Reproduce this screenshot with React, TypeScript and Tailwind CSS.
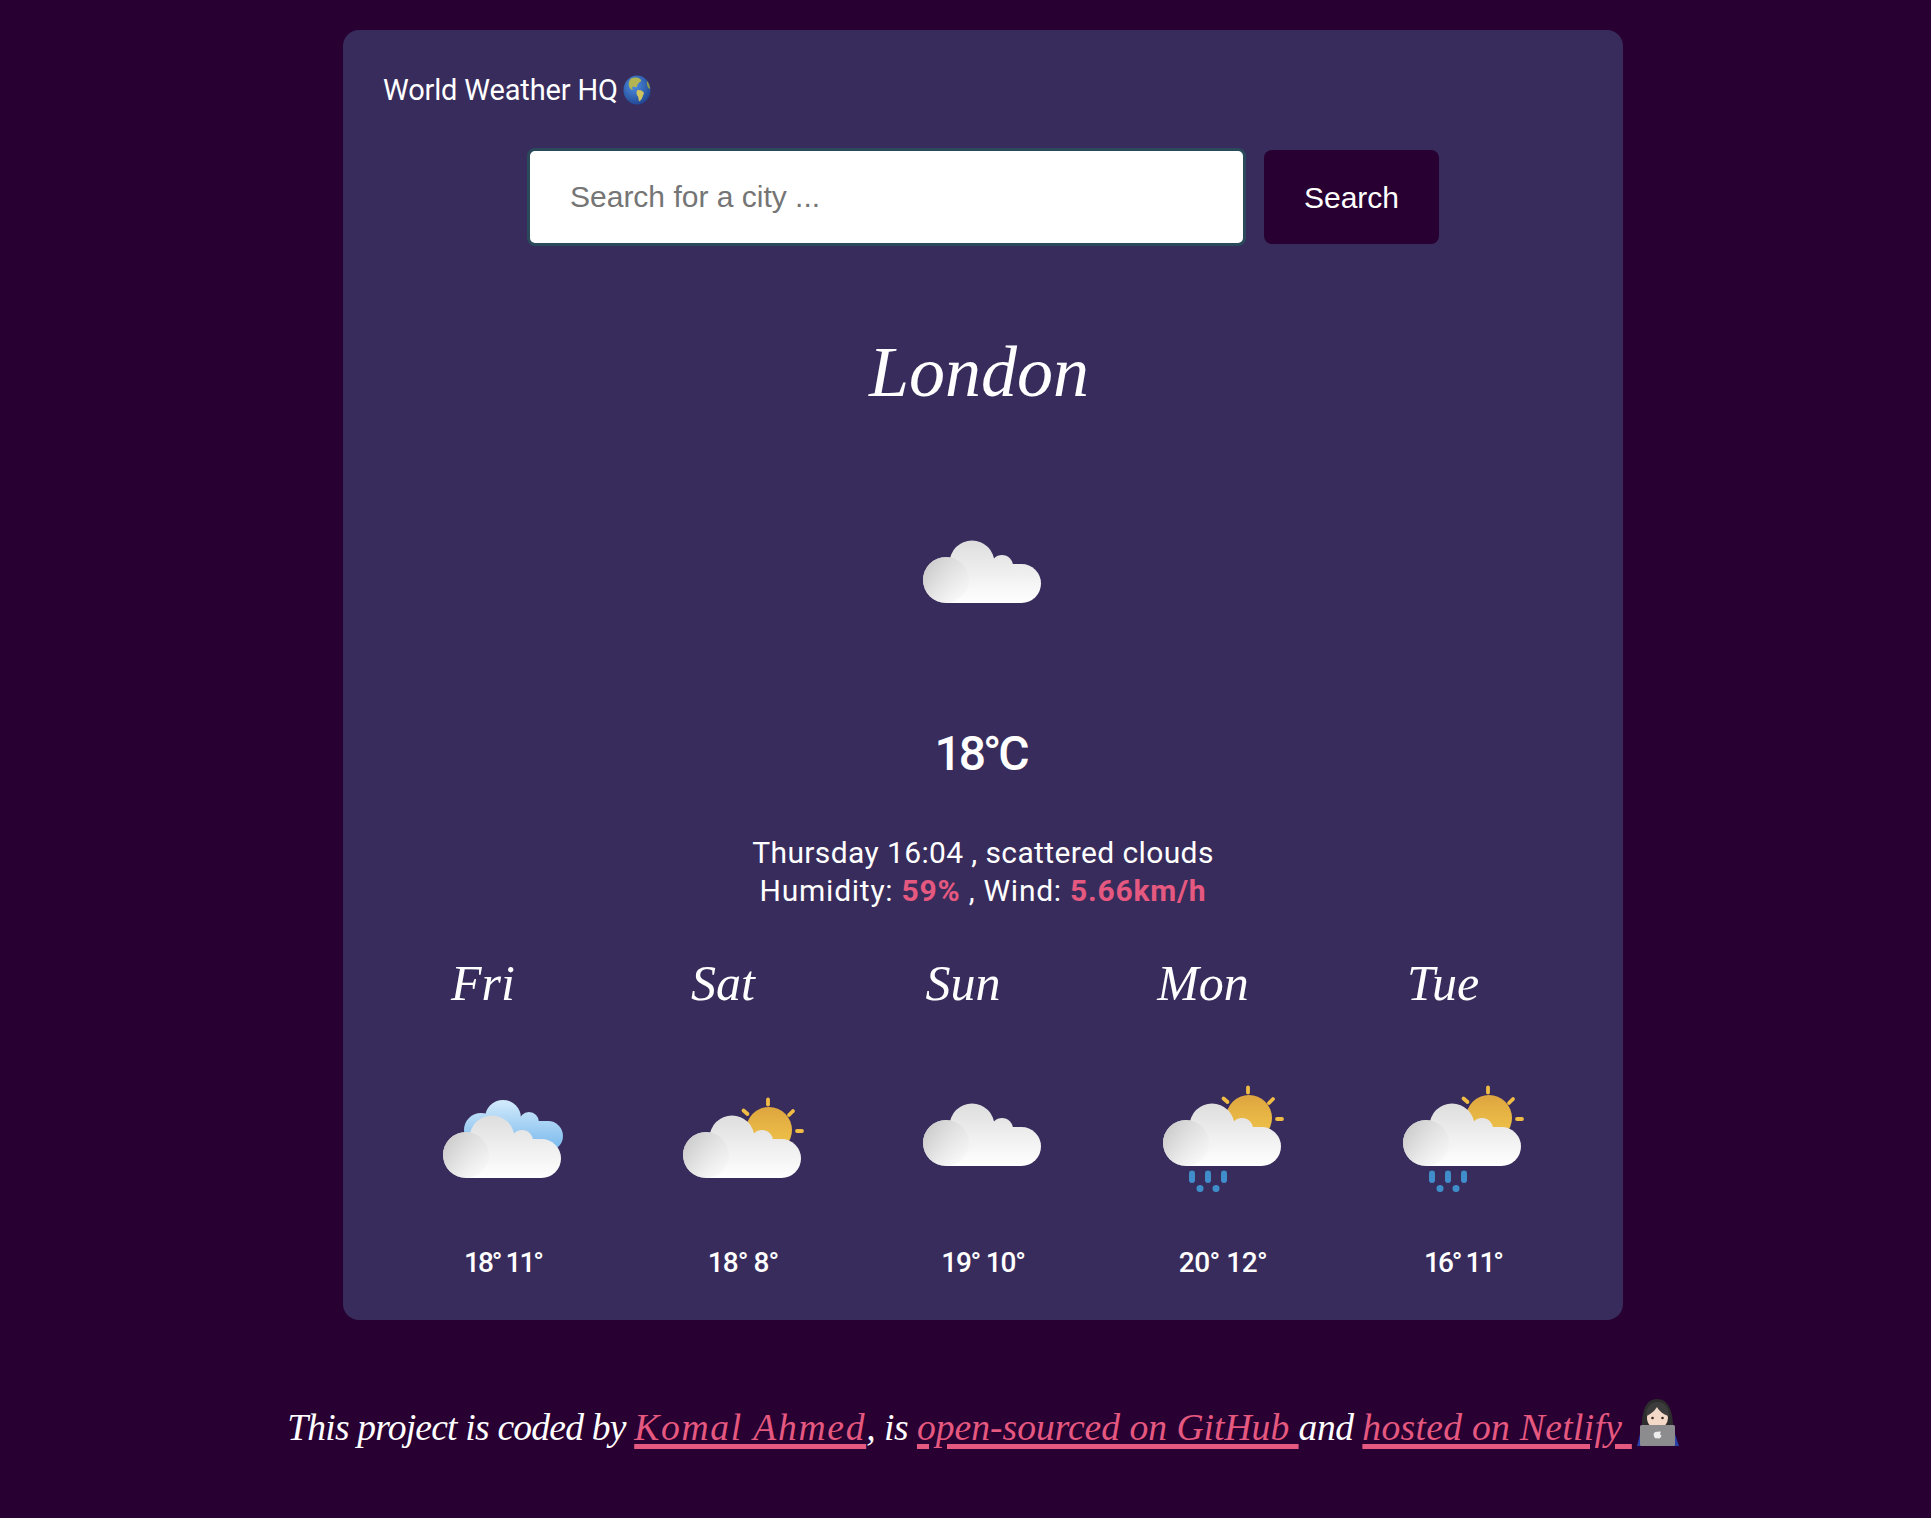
import React from "react";

const barlow = "font-['Roboto',sans-serif]";
const script = "font-['Liberation_Serif',serif] italic";

type Kind = "cloud" | "blue" | "sun" | "rain";

function WeatherIcon({ kind, id }: { kind: Kind; id: string }) {
  const up = kind === "cloud" || kind === "rain" ? -13 : -1;
  const sun = kind === "sun" || kind === "rain";
  return (
    <svg width="160" height="160" viewBox="-20 -50 160 160" className="block">
      <defs>
        <linearGradient id={`c${id}`} x1="0" y1="0" x2="0" y2="62" gradientUnits="userSpaceOnUse">
          <stop offset="0" stopColor="#dedede" />
          <stop offset="1" stopColor="#ffffff" />
        </linearGradient>
        <linearGradient id={`l${id}`} x1="0" y1="24" x2="46" y2="52" gradientUnits="userSpaceOnUse">
          <stop offset="0" stopColor="#c8c8c8" />
          <stop offset="1" stopColor="#e9e9e9" stopOpacity="0.12" />
        </linearGradient>
        <linearGradient id={`s${id}`} x1="0" y1="-9" x2="0" y2="37" gradientUnits="userSpaceOnUse">
          <stop offset="0" stopColor="#dea53f" />
          <stop offset="1" stopColor="#f2c94c" />
        </linearGradient>
        <linearGradient id={`b${id}`} x1="0" y1="-16" x2="0" y2="34" gradientUnits="userSpaceOnUse">
          <stop offset="0" stopColor="#d3ebfc" />
          <stop offset="1" stopColor="#78b8ec" />
        </linearGradient>
      </defs>
      <g transform={`translate(0 ${up})`}>
        {kind === "blue" && (
          <g fill={`url(#b${id})`}>
            <circle cx="38" cy="14" r="17" />
            <circle cx="60" cy="2" r="18" />
            <circle cx="86" cy="6" r="10" />
            <circle cx="105" cy="20" r="15" />
            <rect x="36" y="5" width="70" height="30" />
          </g>
        )}
        {sun && (
          <g>
            <circle cx="86" cy="14" r="23" fill={`url(#s${id})`} />
            <g stroke="#f0bc45" strokeWidth="3.8" strokeLinecap="round">
              <line x1="85" y1="-16.500" x2="85" y2="-11.500" />
              <line x1="110" y1="-5" x2="106" y2="-1" />
              <line x1="60.500" y1="-5.500" x2="64.500" y2="-2" />
              <line x1="114" y1="15" x2="119" y2="15" />
            </g>
          </g>
        )}
        <g fill={`url(#c${id})`}>
          <circle cx="23" cy="39" r="23" />
          <circle cx="49" cy="22" r="22.500" />
          <circle cx="79" cy="25" r="11" />
          <circle cx="98.500" cy="42.500" r="19.500" />
          <rect x="23" y="23" width="75" height="39" />
        </g>
        <circle cx="23" cy="39" r="23" fill={`url(#l${id})`} />
        {kind === "rain" && (
          <g fill="#3f8ecb">
            <rect x="26" y="66.500" width="6" height="12.500" rx="3" />
            <rect x="42" y="66.500" width="6" height="12.500" rx="3" />
            <rect x="58" y="66.500" width="6" height="12.500" rx="3" />
            <circle cx="37" cy="84.500" r="3.500" />
            <circle cx="53" cy="84.500" r="3.500" />
          </g>
        )}
      </g>
    </svg>
  );
}

function Globe() {
  return (
    <svg width="28" height="30" viewBox="0 0 28 30" className="ml-[5px] inline-block align-[-5px]">
      <defs>
        <radialGradient id="gl" cx="0.4" cy="0.35" r="0.75">
          <stop offset="0" stopColor="#4f8fe0" />
          <stop offset="1" stopColor="#1c3f8c" />
        </radialGradient>
      </defs>
      <ellipse cx="14" cy="15" rx="13.500" ry="14.500" fill="url(#gl)" />
      <path d="M8 3.500c3-1.500 7-1.500 9 .5 2 1 1 3-1 3.500-1 1.500-2.500 3-2 4.500-1.500.5-3-.5-4-.5-1.500 1-1 3 .5 3.500-2 .5-4-2-4.500-4-.5-2.500-.5-5 2-7.500z" fill="#b3b552" />
      <path d="M14 15.500c2-1 5 0 6.500 1.500 1 1.500-.5 3-1 5-.7 2-2 4-3.500 4.500-.5-2-.5-3.500-1-5-1.500-1.500-2-3.500-1-6z" fill="#d0c25e" />
      <path d="M24 6c2 2 3 5 3 8-1 0-2-1-2.500-2.500-.5-2-1-3.500-.5-5.500z" fill="#8f9a4a" />
    </svg>
  );
}

function Woman() {
  return (
    <svg width="43" height="49" viewBox="0 0 43 49" className="ml-[4px] inline-block align-[-7px]">
      <path d="M1 48l3-12h35l4 12z" fill="#2a3fa8" />
      <path d="M6 40C5 22 6 1 21 1s17 21 16 39z" fill="#2d2d2d" />
      <ellipse cx="21.500" cy="20" rx="10.500" ry="11" fill="#f4d9c8" />
      <path d="M10 18c3-1 8-4 11-9 2 4 7 8 12 9 0-8-4-14-11.500-14S10 10 10 18z" fill="#3c3c3c" />
      <circle cx="16.500" cy="20" r="1.300" fill="#3a2a22" />
      <circle cx="26.500" cy="20" r="1.300" fill="#3a2a22" />
      <rect x="4" y="27" width="35" height="21" rx="1.500" fill="#8c8c8f" />
      <path d="M21.500 34c2-1 3.500 0 3.500 0-1.500 1-1 3 .5 3.500-.5 2-2 3.500-3 3-1-.5-1.500-.5-2.500 0-1.500 0-3.500-4.500-1.500-6 1-.8 2-.8 3-.5z" fill="#ececec" />
    </svg>
  );
}

const days: { d: string; i: Kind; t: string; c: string }[] = [
  { d: "Fri", i: "blue", t: "18° 11°", c: "tracking-[-2px]" },
  { d: "Sat", i: "sun", t: "18° 8°", c: "tracking-[-0.9px]" },
  { d: "Sun", i: "cloud", t: "19° 10°", c: "tracking-[-1.2px]" },
  { d: "Mon", i: "rain", t: "20° 12°", c: "tracking-[-0.5px]" },
  { d: "Tue", i: "rain", t: "16° 11°", c: "tracking-[-2px]" },
];

const link = "text-[#e5587f] underline decoration-[5px] underline-offset-[4px]";

export default function App() {
  return (
    <div className="min-h-[1518px] bg-[#280032] pt-[30px] pl-[35px] text-white">
      <div className="mx-auto flex h-[1290px] w-[1280px] flex-col rounded-[16px] bg-[#382c5c] px-10 pt-10">
        <h1 className={`${barlow} h-10 text-[29px] leading-10 font-normal tracking-[-0.15px]`}>
          World Weather HQ
          <Globe />
        </h1>
        <form className="mt-[38px] ml-[144px] flex h-[98px] items-center">
          <input
            placeholder="Search for a city ..."
            className="h-[98px] w-[719px] rounded-[8px] border-[3px] border-[#2a4a5c] bg-white pl-[40px] font-['Liberation_Sans',sans-serif] text-[30px] text-black outline-none placeholder:text-[#757575]"
          />
          <button
            type="button"
            className="ml-[18px] h-[94px] w-[175px] rounded-[8px] bg-[#280032] font-['Liberation_Sans',sans-serif] text-[30px] text-white"
          >
            Search
          </button>
        </form>
        <h2 className={`${script} mt-[76px] h-[100px] pr-[8px] text-center text-[72px] leading-[100px] font-normal`}>London</h2>
        <div className="mt-[82px] flex justify-center">
          <WeatherIcon kind="cloud" id="main" />
        </div>
        <div className={`${barlow} mt-[54px] h-[72px] pr-[5px] text-center text-[48px] leading-[72px] font-medium tracking-[-3px]`}>18°C</div>
        <div className={`${barlow} mt-[44px] text-center text-[30px] leading-[38px]`}>
          <div className="tracking-[0.38px]">Thursday 16:04 , scattered clouds</div>
          <div className="tracking-[0.75px]">
            Humidity: <span className="font-bold text-[#e5587f]">59%</span> , Wind:{" "}
            <span className="font-bold text-[#e5587f]">5.66km/h</span>
          </div>
        </div>
        <div className="mt-[43px] grid grid-cols-5">
          {days.map((x) => (
            <div key={x.d} className="flex flex-col items-center">
              <div className={`${script} h-[60px] pr-[40px] text-[50px] leading-[60px]`}>{x.d}</div>
              <div className="mt-[54px]">
                <WeatherIcon kind={x.i} id={x.d} />
              </div>
              <div className={`${barlow} ${x.c} mt-[15px] h-[42px] text-[28px] leading-[42px] font-medium`}>{x.t}</div>
            </div>
          ))}
        </div>
      </div>
      <footer className={`${script} mt-[78px] flex h-[60px] justify-center text-[37.600px] leading-[60px] whitespace-pre`}>
        <span>
          <span className="tracking-[-0.8px]">This project is coded by </span>
          <a className={`${link} tracking-[1.7px]`}>Komal Ahmed</a>
          <span className="tracking-[-0.5px]">, is </span>
          <a className={link}>open-sourced on GitHub </a>
          <span className="tracking-[-0.5px]">and </span>
          <a className={`${link} tracking-[0.3px]`}>hosted on Netlify </a>
          <Woman />
        </span>
      </footer>
    </div>
  );
}
